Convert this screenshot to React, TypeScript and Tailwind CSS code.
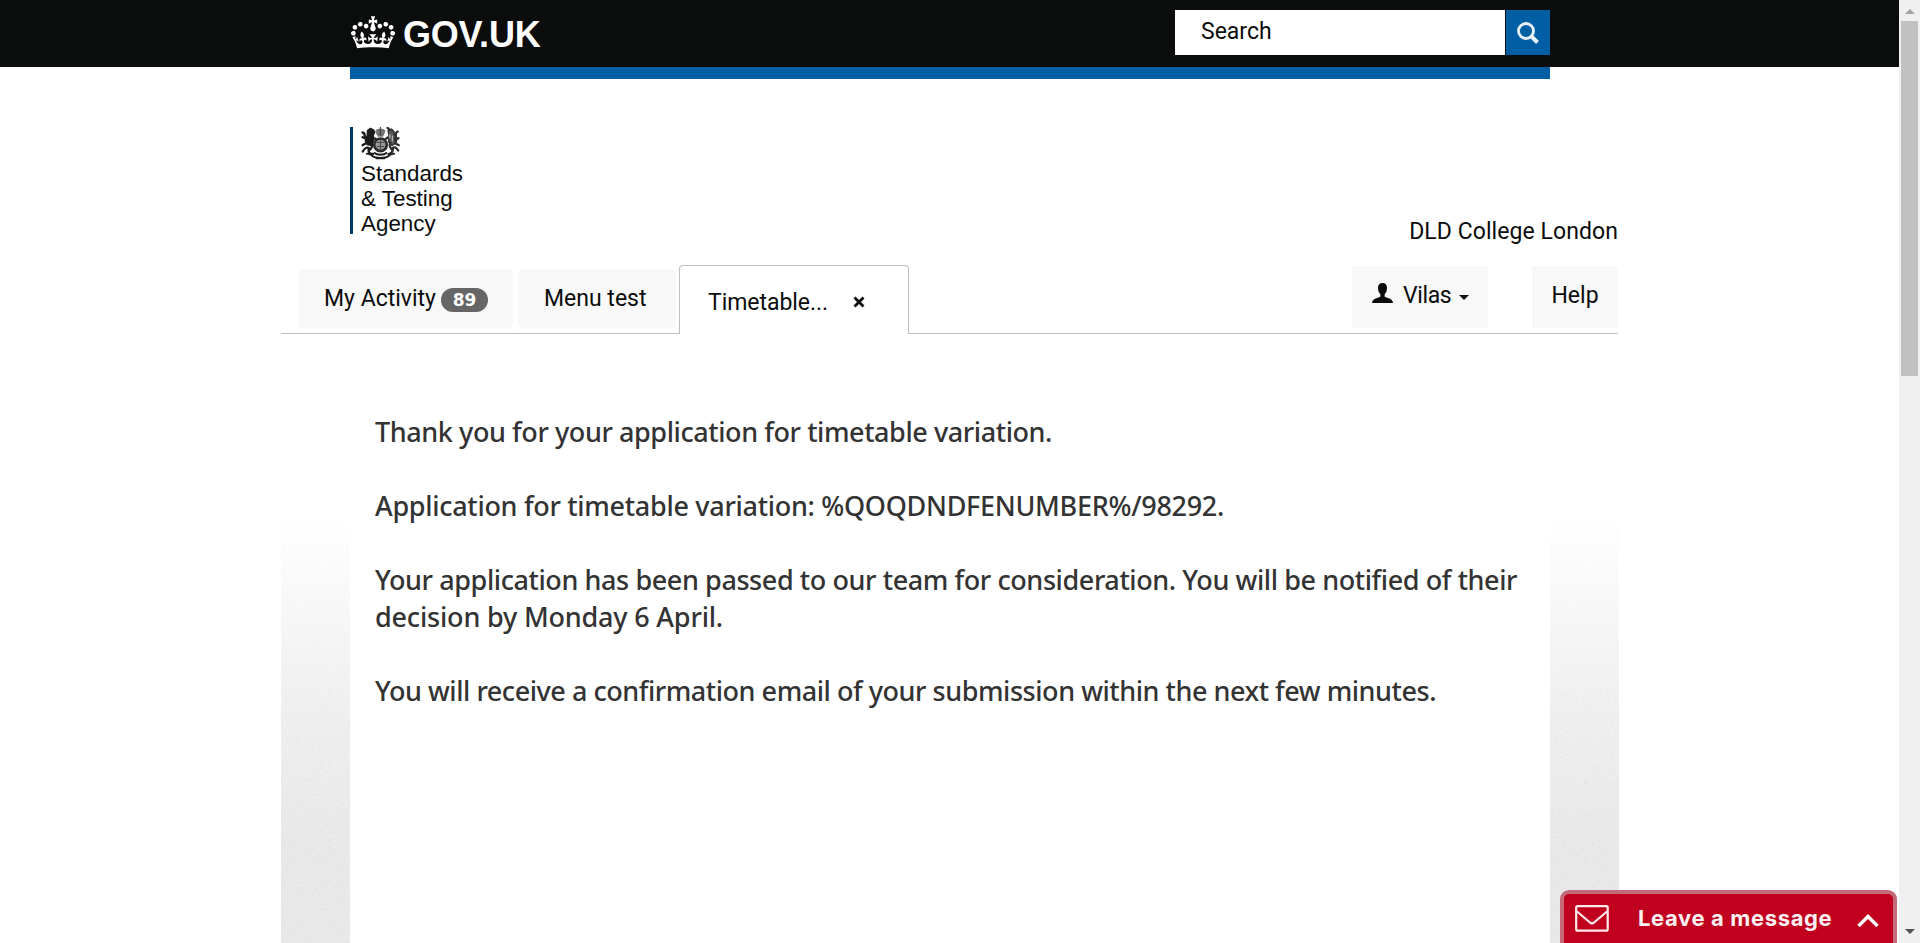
import type { ReactNode } from "react";

function Crown() {
  return (
    <svg viewBox="0 0 132 97" className="h-[33px] w-[44px] shrink-0" fill="#fff">
      <path d="M25 30.2c3.5 1.5 7.7-.2 9.1-3.7 1.5-3.6-.2-7.8-3.9-9.2-3.6-1.4-7.6.3-9.1 3.9-1.4 3.5.3 7.5 3.9 9zM9 39.5c3.6 1.5 7.8-.2 9.2-3.7 1.5-3.6-.2-7.8-3.9-9.1-3.6-1.5-7.6.2-9.1 3.8-1.4 3.5.3 7.5 3.8 9zM4.4 57.2c3.5 1.5 7.7-.2 9.1-3.8 1.5-3.6-.2-7.7-3.9-9.1-3.5-1.5-7.6.3-9.1 3.8-1.4 3.5.3 7.6 3.9 9.1zm38.3-21.4c3.5 1.5 7.7-.2 9.1-3.8 1.5-3.6-.2-7.7-3.9-9.1-3.6-1.5-7.6.3-9.1 3.8-1.3 3.6.4 7.7 3.9 9.1zm64.4-5.6c-3.6 1.5-7.8-.2-9.1-3.7-1.5-3.6.2-7.8 3.8-9.2 3.6-1.4 7.7.3 9.2 3.9 1.3 3.5-.4 7.5-3.9 9zm15.9 9.3c-3.6 1.5-7.7-.2-9.1-3.7-1.5-3.6.2-7.8 3.7-9.1 3.6-1.5 7.7.2 9.2 3.8 1.5 3.5-.3 7.5-3.8 9zm4.7 17.7c-3.6 1.5-7.8-.2-9.2-3.8-1.5-3.6.2-7.7 3.9-9.1 3.6-1.5 7.7.3 9.2 3.8 1.3 3.5-.4 7.6-3.9 9.1zM89.3 35.8c-3.6 1.5-7.8-.2-9.2-3.8-1.4-3.6.2-7.7 3.9-9.1 3.6-1.5 7.7.3 9.2 3.8 1.4 3.6-.3 7.7-3.9 9.1zM69.7 17.7l8.9 4.7V9.3l-8.9 2.8c-.2-.3-.5-.6-.9-.9L72.4 0H59.6l3.5 11.2c-.3.3-.6.5-.9.9l-8.8-2.8v13.1l8.8-4.7c.3.3.6.7.9.9l-5 15.4v.1c-.2.8-.4 1.6-.4 2.4 0 4.1 3.1 7.5 7 8.1h.2c.3 0 .7.1 1 .1.4 0 .7 0 1-.1h.2c4-.6 7.1-4.1 7.1-8.1 0-.8-.1-1.7-.4-2.4V34l-5.1-15.4c.4-.2.7-.6 1-.9zM66 92.8c16.9 0 32.8 1.1 47.1 3.2 4-16.9 8.9-26.7 14-33.5l-9.6-3.4c1 4.9 1.1 7.2 0 10.2-1.5-1.4-3-4.3-4.2-8.7L108.6 76c2.8-2 5-3.2 7.5-3.3-4.4 9.4-10 11.9-13.6 11.2-4.3-.8-6.3-4.6-5.6-7.9 1-4.7 5.7-5.9 8-.5 4.3-8.7-3-11.4-7.6-8.8 7.1-7.2 7.9-13.5 2.1-21.1-8 6.1-8.1 12.3-4.5 20.8-4.7-5.4-12.1-2.5-9.5 6.2 3.4-5.2 7.9-2 7.2 3.1-.6 4.3-6.4 7.8-13.5 7.2-10.3-.9-10.9-8-11.2-13.8 2.5-.5 7.1 1.8 11 7.3L80.2 60c-4.1 4.4-8 5.3-12.3 5.4 1.4-4.4 8-11.6 8-11.6H55.5s6.4 7.2 7.9 11.6c-4.2-.1-8-1-12.3-5.4l1.4 16.4c3.9-5.5 8.5-7.7 10.9-7.3-.3 5.8-.9 12.8-11.1 13.8-7.2.6-12.9-2.9-13.5-7.2-.7-5 3.8-8.3 7.1-3.1 2.7-8.7-4.6-11.6-9.4-6.2 3.7-8.5 3.6-14.7-4.6-20.8-5.8 7.6-5 13.9 2.2 21.1-4.7-2.6-11.9.1-7.7 8.8 2.3-5.5 7.1-4.2 8.1.5.7 3.3-1.3 7.1-5.7 7.9-3.5.7-9-1.8-13.5-11.2 2.5.1 4.7 1.3 7.5 3.3l-4.7-15.4c-1.2 4.4-2.7 7.2-4.3 8.7-1.1-3-.9-5.3 0-10.2l-9.5 3.4c5 6.9 9.9 16.7 14 33.5 14.8-2.1 30.8-3.2 47.7-3.2z" />
    </svg>
  );
}

function Crest() {
  return (
    <svg viewBox="0 0 39 33" className="h-[33px] w-[39px]" fill="none" stroke="#1c1c1c" strokeLinecap="round" strokeLinejoin="round">
      {/* crown */}
      <path d="M15 3.5c1.5-1.2 3-1.4 4.4-.9 1.4-.5 3-.3 4.5.9l-1.2 4h-6.4z" fill="#777" stroke="#555" strokeWidth=".8" />
      <path d="M19.4.5v7M17 8.800h5" strokeWidth="1.3" stroke="#444" />
      {/* lion */}
      <path d="M6.500 3.500 9.500 1.300l3.300 1.700.8 3-1.400 2 .6 5-2.400 5.500-4.400-1-1.800-4.100 2-4.900z" fill="#1c1c1c" strokeWidth="1.300" />
      <path d="M9.500 15c3 2.500 1.500 6.500-1 8M12 11l3 1M6 12l-4.500-1.800M4.500 16.500 1.500 18.200M1.500 5.500C5 6 2.500 9 5 11.500M8.500 21.500C5.500 19.500 3.500 21.500 1.800 24.500M7.500 23c0 3 2 4 4.500 4" strokeWidth="2.300" />
      {/* unicorn */}
      <path d="M27 3.500 30.500 2l2.500 2.500.5 3 2.500 3.500-1 5-4 2.500-3.500-3.500.5-6z" fill="#555" stroke="#2c2c2c" strokeWidth="1.300" />
      <path d="M29 3 26.500.8M29.500 16c-2 2.500 0 5.500 2 7M26.800 10.500 24.500 12M34 13.500 37.500 11.200M36.800 4.500c-3.500 1-.8 4-2.600 7M31 21.500c2.500-2 4.500-1 6.200 2M32 22.500c-.5 2.500-2 4-4.500 4.500M34.500 16.500l3.300 1.700" stroke="#2c2c2c" strokeWidth="2.200" />
      <path d="M28.800 7.500v3.500M31.300 9v5" stroke="#ddd" strokeWidth=".9" />
      {/* shield and garter */}
      <circle cx="19.500" cy="17.800" r="6.300" fill="#999" strokeWidth="2.600" stroke="#2c2c2c" />
      <path d="M16 15.500h7M16.300 19.500h6.500M19.500 12.500v10.500" stroke="#4a4a4a" strokeWidth="1" />
      {/* scroll and compartment */}
      <path d="M6 26.800c2.500-.5 4 .5 5.500 2.200 3 2.500 13 2.500 16 0 1.500-1.700 3-2.700 5.500-2.200" strokeWidth="2" />
      <path d="M13.500 26c1.500 1.300 4 1.700 6 1.700s4.500-.4 6-1.700M15.500 31.300h8" strokeWidth="1.900" />
    </svg>
  );
}

function TexturedStrip() {
  return (
    <div className="flex w-[69px] bg-linear-to-b from-white from-[185px] via-[#f3f3f3] via-[375px] to-[#ececec] to-[510px]">
      <svg className="h-full w-full opacity-[0.15] mask-t-from-35% mask-t-to-70%">
        <filter id="grain">
          <feTurbulence type="fractalNoise" baseFrequency="0.4" numOctaves="2" />
        </filter>
        <rect width="100%" height="100%" filter="url(#grain)" />
      </svg>
    </div>
  );
}

function Paragraph({ children, className }: { children: ReactNode; className: string }) {
  return <p className={`whitespace-nowrap ${className}`}>{children}</p>;
}

export default function App() {
  return (
    <div className="relative flex h-[943px] w-[1920px] overflow-hidden bg-white font-['Roboto',sans-serif] text-[23px] text-[#0b0c0c]">
      <div className="flex flex-1 flex-col">
        <header className="flex h-[67px] shrink-0 items-start bg-[#0b0c0c] pl-[351px]">
          <a className="flex items-start gap-2 pt-4 text-white">
            <Crown />
            <span className="font-['Liberation_Sans',sans-serif] text-[36px] leading-[38px] font-bold tracking-[-0.2px]">GOV.UK</span>
          </a>
          <div className="mt-2.5 ml-auto mr-[349px] flex h-[45px] gap-px">
            <div className="flex w-[330px] items-center bg-white pb-px pl-[26px]">Search</div>
            <button className="flex w-11 items-center justify-center bg-[#005ea5]">
              <svg viewBox="0 0 22 22" className="h-[22px] w-[22px]" fill="none" stroke="#e9f1f8">
                <circle cx="9" cy="9" r="7.500" strokeWidth="2.800" />
                <path d="m14.500 14.500 6 6" strokeWidth="4" />
              </svg>
            </button>
          </div>
        </header>
        <div className="ml-[350px] h-3 w-[1200px] shrink-0 bg-[#005ea5]" />

        <section className="ml-[281px] flex h-[255px] w-[1338px] shrink-0">
          <div className="flex flex-1 flex-col justify-between">
            <div className="mt-12 ml-[69px] h-[107px] border-l-3 border-[#003a69] pl-2">
              <Crest />
              <div className="pt-px font-['Liberation_Sans',sans-serif] text-[22.4px] leading-[25px]">
                <p>Standards</p>
                <p>&amp; Testing</p>
                <p>Agency</p>
              </div>
            </div>
            <nav className="flex h-[69px] items-start border-b border-[#bfbfbf] pl-[17px]">
              <div className="mt-1 flex h-[60px] w-[215px] items-center rounded-md bg-[#f8f8f8] pl-[26px]">
                <span>My Activity</span>
                <span className="ml-[5px] flex h-6 w-[47px] items-center justify-center rounded-full bg-[#666] font-['DejaVu_Sans',sans-serif] text-[17px] leading-none font-bold text-white mt-0.5">89</span>
              </div>
              <div className="mt-1 ml-[5px] flex h-[60px] w-[158px] items-center rounded-md bg-[#f8f8f8] pl-[26px]">Menu test</div>
              <div className="ml-[3px] flex h-[69px] w-[230px] items-center rounded-t border border-b-0 border-[#bfbfbf] bg-white pt-1.5 pl-7">
                <span className="tracking-[-0.05px]">Timetable...</span>
                <svg viewBox="0 0 12 12" className="mb-0.5 ml-[25px] h-3 w-3" stroke="#0b0c0c" strokeWidth="2.800">
                  <path d="m1.500 1.500 9 9m0-9-9 9" />
                </svg>
              </div>
            </nav>
          </div>
          <div className="flex w-[267px] flex-col">
            <p className="mt-[139px] mr-px text-right leading-[27px] tracking-[0.07px]">DLD College London</p>
            <div className="mr-px mt-auto flex h-[68px] justify-between border-b border-[#bfbfbf]">
              <button className="flex h-[62px] w-[136px] items-center bg-[#f8f8f8] pb-0.5 pl-5">
                <svg viewBox="0 0 21 20" className="-mt-1.5 h-5 w-[21px]" fill="#0b0c0c">
                  <path d="M10.500 0C7.500 0 5.800 2 6 5c0 2.700 1 5 2.400 6.200v2.300C7 14.800 1.500 15.500.500 18L0 20h21l-.500-2c-1-2.500-6.500-3.200-7.900-4.500v-2.300C14 10 15 7.700 15 5c.200-3-1.500-5-4.500-5z" />
                </svg>
                <span className="ml-[10px] tracking-[-0.4px]">Vilas</span>
                <svg viewBox="0 0 10 5" className="mt-0.5 ml-2 h-[5px] w-2.5" fill="#0b0c0c"><path d="M0 0h10L5 5z" /></svg>
              </button>
              <button className="flex h-[62px] w-[86px] items-center justify-center bg-[#f8f8f8] pb-0.5">Help</button>
            </div>
          </div>
        </section>

        <div className="ml-[281px] flex w-[1338px] flex-1">
          <TexturedStrip />
          <main className="flex w-[1200px] flex-col gap-[37px] bg-white pt-[79px] pl-[25px] font-['Noto_Sans',sans-serif] text-[27px] leading-[37px] font-medium text-[#333]">
            <Paragraph className="tracking-[-0.420px]">Thank you for your application for timetable variation.</Paragraph>
            <Paragraph className="tracking-[-0.300px]">Application for timetable variation: %QOQDNDFENUMBER%/98292.</Paragraph>
            <div>
              <Paragraph className="tracking-[-0.412px]">Your application has been passed to our team for consideration. You will be notified of their</Paragraph>
              <Paragraph className="tracking-[-0.186px]">decision by Monday 6 April.</Paragraph>
            </div>
            <Paragraph className="tracking-[-0.459px]">You will receive a confirmation email of your submission within the next few minutes.</Paragraph>
          </main>
          <TexturedStrip />
        </div>
      </div>

      <div className="flex w-[21px] flex-col items-center bg-[#f0f0f0] pt-[9px] pb-[9px]">
        <svg viewBox="0 0 10 5" className="h-[5px] w-2.5 shrink-0" fill="#a3a3a3"><path d="M0 5h10L5 0z" /></svg>
        <div className="mt-[7px] h-[355px] w-[17px] bg-[#c1c1c1]" />
        <svg viewBox="0 0 10 5" className="mt-auto h-[5px] w-2.5 shrink-0" fill="#505050"><path d="M0 0h10L5 5z" /></svg>
      </div>

      <div className="absolute right-[23px] bottom-0 flex h-[53px] w-[337px] items-start rounded-t-[9px] border-4 border-b-0 border-[#c46a78] bg-[#c1001f] font-['Inter',sans-serif] text-[22px] font-bold text-white">
        <svg viewBox="0 0 34 27" className="mt-[11px] ml-[11px] h-[27px] w-[34px]" fill="none" stroke="#fbe9ec" strokeWidth="2.200" strokeLinejoin="round">
          <rect x="1.200" y="1.200" width="31.500" height="24.500" rx="1.500" />
          <path d="m2 6.500 13 11q2 1.500 4 0l13-11" />
        </svg>
        <span className="mt-[8px] ml-[29px] leading-[33px] tracking-[0.63px] text-[#fdf0f2]">Leave a message</span>
        <svg viewBox="0 0 22 14" className="mt-[20px] ml-[25px] h-3.5 w-[22px]" fill="none" stroke="#fff" strokeWidth="3.400"><path d="m1.500 12 9.500-9.500L20.500 12" /></svg>
      </div>
    </div>
  );
}
